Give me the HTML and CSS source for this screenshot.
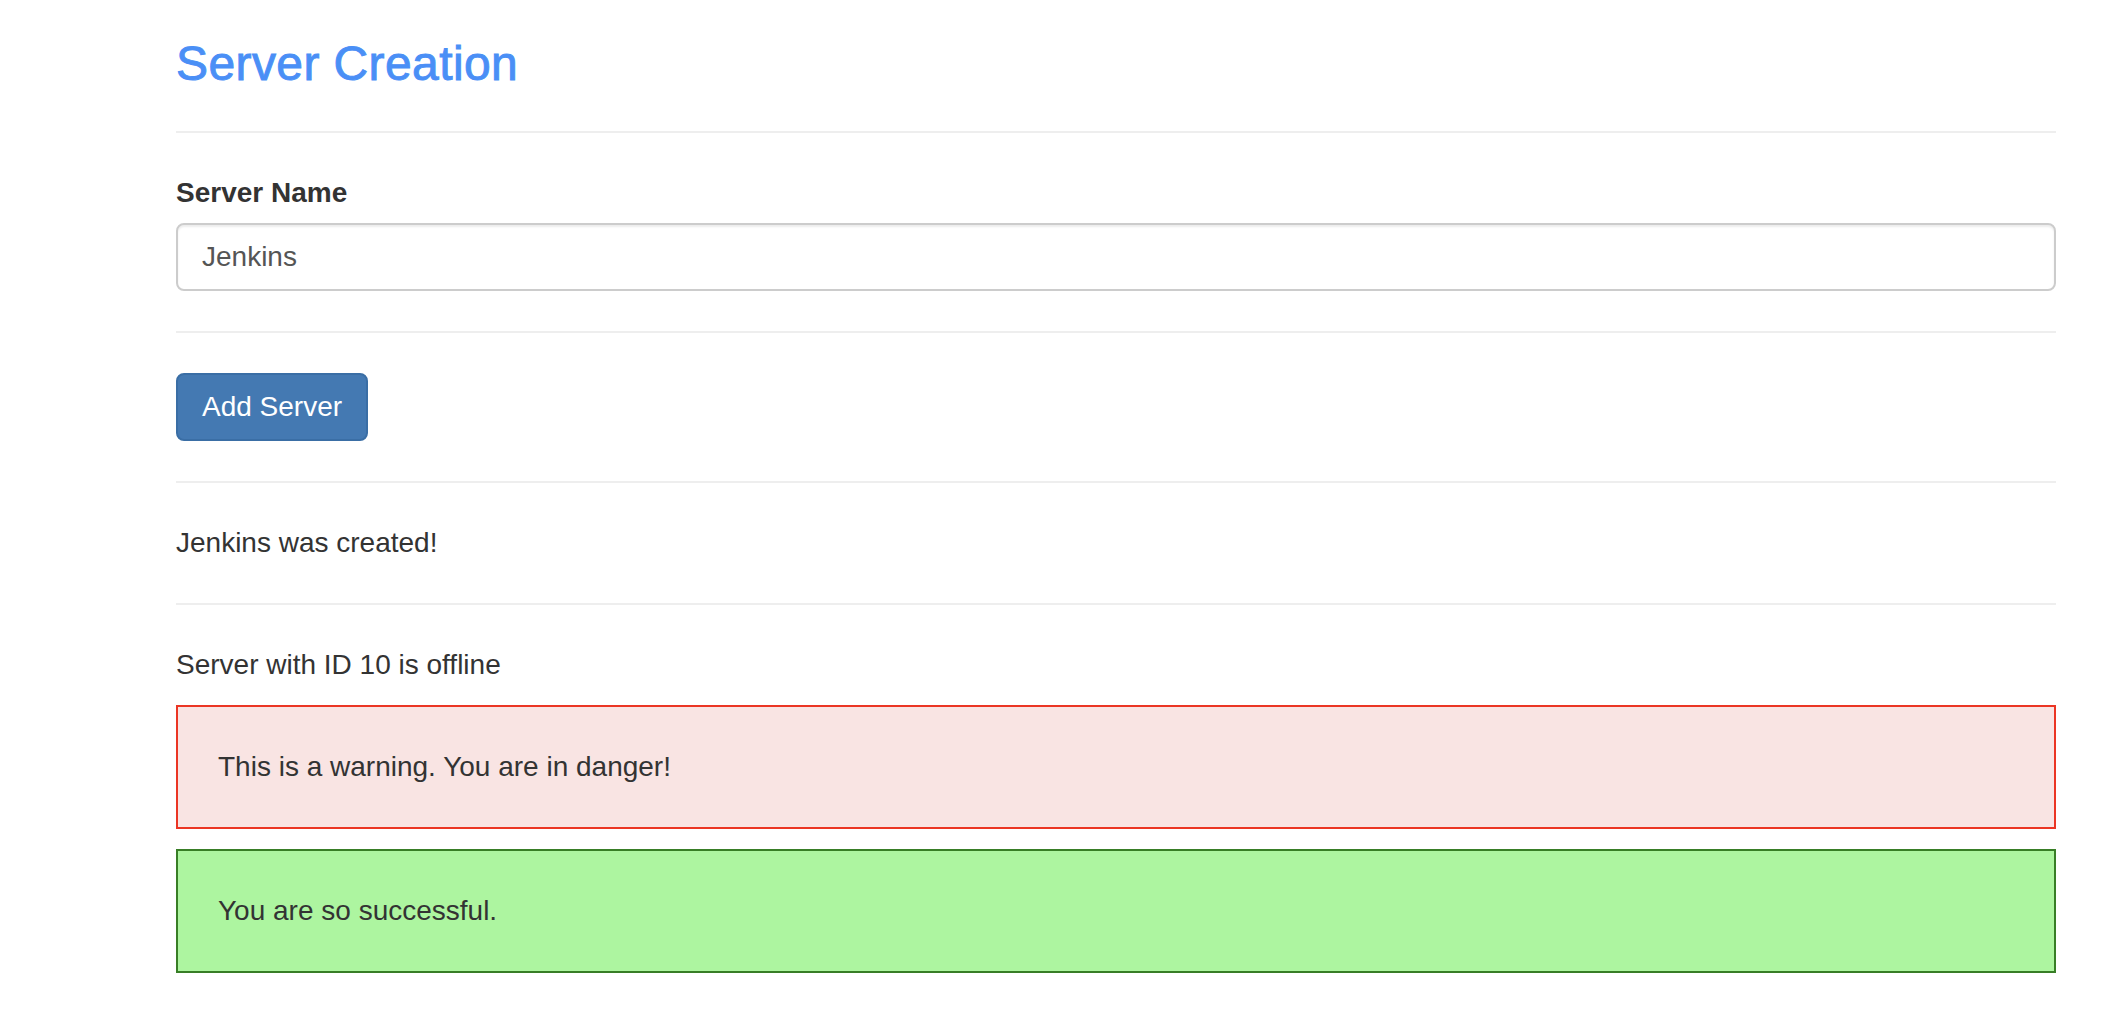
FILE: index.html
```html
<!DOCTYPE html>
<html lang="en">
<head>
<meta charset="utf-8">
<title>Server Creation</title>
<link rel="stylesheet" href="styles.css">
</head>
<body>
<div class="container">
  <h3 class="title">Server Creation</h3>
  <hr class="divider">
  <div class="form-group">
    <label class="label" for="serverName">Server Name</label>
    <input class="form-control" id="serverName" type="text" value="Jenkins">
  </div>
  <hr class="divider">
  <button class="btn-primary" type="button">Add Server</button>
  <hr class="divider">
  <p class="text">Jenkins was created!</p>
  <hr class="divider">
  <p class="text">Server with ID 10 is offline</p>
  <div class="alert alert-danger"><p class="alert-text">This is a warning. You are in danger!</p></div>
  <div class="alert alert-success"><p class="alert-text">You are so successful.</p></div>
</div>
</body>
</html>
```

FILE: styles.css
```css
html, body {
  margin: 0;
  padding: 0;
  background: #ffffff;
}

body {
  font-family: "Liberation Sans", Arial, Helvetica, sans-serif;
  font-size: 28px;
  line-height: 40px;
  color: #333333;
}

.container {
  width: 1880px;
  margin-left: 176px;
  padding-bottom: 40px;
}

.title {
  margin: 38px 0 20px;
  font-size: 48px;
  line-height: 52.8px;
  font-weight: 400;
  letter-spacing: 0.4px;
  color: #4a8ff6;
  -webkit-text-stroke: 0.9px #4a8ff6;
}

.divider {
  margin: 40px 0;
  border: 0;
  border-top: 2px solid #eeeeee;
  height: 0;
}

.form-group {
  margin-bottom: 30px;
}

.label {
  display: inline-block;
  margin-bottom: 10px;
  font-weight: bold;
}

.form-control {
  display: block;
  box-sizing: border-box;
  width: 100%;
  height: 68px;
  padding: 12px 24px;
  margin: 0;
  font-family: inherit;
  font-size: 28px;
  line-height: 40px;
  color: #555555;
  background: #ffffff;
  border: 2px solid #cccccc;
  border-radius: 8px;
  box-shadow: inset 0 2px 2px rgba(0, 0, 0, 0.075);
  outline: none;
}

.btn-primary {
  display: inline-block;
  box-sizing: border-box;
  height: 68px;
  padding: 12px 24px;
  margin: 0;
  font-family: inherit;
  font-size: 28px;
  line-height: 40px;
  color: #ffffff;
  background: #4479b2;
  border: 2px solid #3a6ea5;
  border-radius: 8px;
  vertical-align: top;
}

.text {
  margin: 0 0 20px;
}

.alert {
  padding: 40px;
  margin-bottom: 20px;
  border: 2px solid;
}

.alert-text {
  margin: 0;
}

.alert-danger {
  background: #f9e4e3;
  border-color: #eb3524;
}

.alert-success {
  background: #adf5a0;
  border-color: #387e26;
}
```
